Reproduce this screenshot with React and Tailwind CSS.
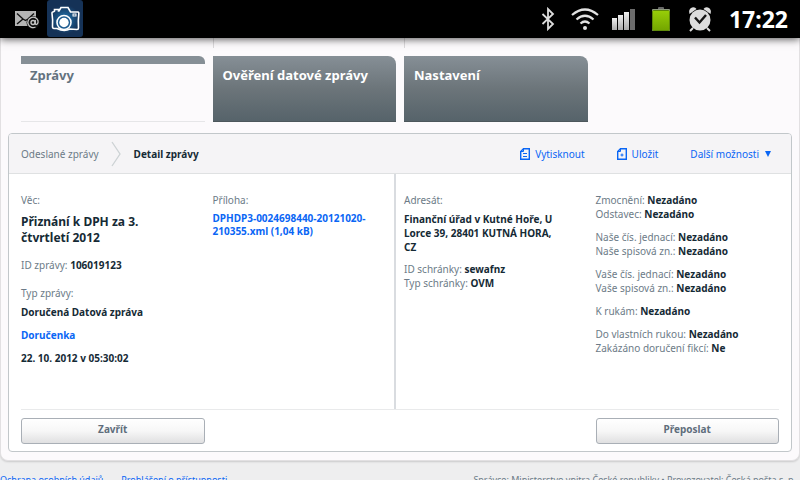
const font = 'font-["Noto_Sans","Open_Sans",sans-serif]';

function StatusBar() {
  return (
    <header className="relative z-10 flex h-[38px] items-center justify-between bg-black pl-[15px] pr-3 text-white shadow-[0_1px_8px_rgba(0,0,0,0.7)]">
      <div className="flex items-center gap-[7px]">
        <svg width="25" height="19" viewBox="0 0 25 19" aria-label="E-mail">
          <rect x="0" y="1" width="21" height="15" fill="#b4b4b4" />
          <path d="M2 3.5 L8 9 L10.500 10.500 L13 9 L19 3.500 M2 14 L8 9" fill="none" stroke="#111" strokeWidth="1.400" />
          <circle cx="18" cy="12.500" r="6.500" fill="#111" />
          <circle cx="18" cy="12.500" r="2" fill="none" stroke="#c4c4c4" strokeWidth="1.400" />
          <path d="M20.300 10 V13.500 Q20.500 15 22 14.200 Q23.500 12.800 23 10.800 A5.200 5.200 0 1 0 20.500 17" fill="none" stroke="#c4c4c4" strokeWidth="1.300" />
        </svg>
        <svg width="36" height="38" viewBox="0 0 36 38" aria-label="Fotoaparát">
          <defs>
            <radialGradient id="cam"><stop offset="0" stopColor="#2278b4" /><stop offset="1" stopColor="#153257" /></radialGradient>
          </defs>
          <rect x="0" y="0" width="36" height="37" rx="3" fill="#153257" />
          <rect x="3" y="5" width="30" height="29" fill="url(#cam)" />
          <path d="M7.500 11 V9.500 H11.500 V11 H12 L14 7.500 H21 L23.500 12 H31 Q32 12 31.800 14 Q31 20 31.500 28 Q31.500 29.500 30 29.500 L23 29 Q17 32 10 28.500 H7 Q5.500 28.500 5.500 26.500 Q6 20 5 13.500 Q4.800 12 6.500 11.800 Z" fill="none" stroke="#fff" strokeWidth="1.600" />
          <rect x="26" y="14" width="3" height="2" fill="none" stroke="#fff" />
          <circle cx="17" cy="22.500" r="7" fill="#1e5c90" stroke="#fff" strokeWidth="1.600" />
          <circle cx="17" cy="22.500" r="4.700" fill="#fff" />
        </svg>
      </div>
      <div className="flex items-center">
        <svg width="14" height="24" viewBox="0 0 14 24" className="mr-4" aria-label="Bluetooth">
          <path d="M1.500 7 L12 17 L7 22 V2 L12 7 L1.500 17" fill="none" stroke="#ddd" strokeWidth="1.800" />
        </svg>
        <svg width="28" height="24" viewBox="0 0 28 24" className="mr-3" aria-label="Wi-Fi">
          <path d="M1 8 Q14 -3 27 8 M5.500 12.500 Q14 5 22.500 12.500 M9.500 16.500 Q14 12.500 18.500 16.500" fill="none" stroke="#e2e2e2" strokeWidth="2.200" />
          <circle cx="14" cy="21" r="2" fill="#e2e2e2" />
        </svg>
        <svg width="24" height="24" viewBox="0 0 24 24" className="mr-4" aria-label="Signál">
          <defs><linearGradient id="sig" x2="0" y2="1"><stop stopColor="#eee" /><stop offset="1" stopColor="#aaa" /></linearGradient></defs>
          <rect x="1" y="11" width="5" height="12" fill="url(#sig)" />
          <rect x="7" y="8" width="5" height="15" fill="url(#sig)" />
          <rect x="13" y="5" width="5" height="18" fill="url(#sig)" />
          <rect x="19" y="2" width="5" height="21" fill="#6b6b6b" />
        </svg>
        <svg width="20" height="26" viewBox="0 0 20 26" className="mr-4" aria-label="Baterie">
          <defs><linearGradient id="bat" x2="0" y2="1"><stop stopColor="#98cf08" /><stop offset="1" stopColor="#73a500" /></linearGradient></defs>
          <rect x="7" y="1" width="6" height="3" rx="1" fill="#666" />
          <rect x="1" y="3" width="18" height="22" rx="1" fill="#8f9a80" />
          <rect x="1.500" y="4.500" width="17" height="20" rx="1" fill="url(#bat)" stroke="#5f8a08" strokeWidth="1" />
        </svg>
        <svg width="26" height="26" viewBox="0 0 26 26" className="mr-4" aria-label="Budík">
          <path d="M6 22 L3 25 M20 22 L23 25" stroke="#ddd" strokeWidth="2" />
          <path d="M2.500 8 Q1 3 5 1.500 Q8 0.500 9.500 3 Z M23.500 8 Q25 3 21 1.500 Q18 0.500 16.500 3 Z" fill="#ddd" />
          <circle cx="13" cy="14" r="10.500" fill="#ddd" />
          <path d="M8 11.500 L12.500 16.500 L19 9" fill="none" stroke="#151515" strokeWidth="2.400" />
        </svg>
        <time className="text-[23px] font-bold leading-8">17:22</time>
      </div>
    </header>
  );
}

function Tabs() {
  const dark =
    "h-[66px] w-full rounded-tr-lg bg-linear-to-b from-[#868f96] via-[#6c757a] to-[#56636a] px-[10px] pt-[9px] text-left text-[13px] leading-5 font-bold text-white border-b border-[#4d575c] flex items-start";
  return (
    <nav className="grid grid-cols-4 gap-2 px-[13px]">
      <button className="flex h-[66px] w-full items-start overflow-hidden rounded-tr-md border-b border-[#e6e6e8] text-left">
        <span className="w-full border-t-8 border-[#868f96] px-[9px] pt-px text-[13px] leading-5 font-bold text-[#63727f]">Zprávy</span>
      </button>
      <button className={dark}>Ověření datové zprávy</button>
      <button className={dark}>Nastavení</button>
    </nav>
  );
}

function DocIcon({ children }) {
  return (
    <svg width="10" height="12" viewBox="0 0 10 12" fill="none" stroke="#0a66f5" aria-hidden="true">
      <path d="M3.500 0.700 H9.300 V11.300 H0.700 V3.500 Z" strokeWidth="1.400" />
      <path d="M3.500 1 V3.500 H1" />
      {children}
    </svg>
  );
}

function Field({ label, value }) {
  return (
    <div>
      {label} <b className="text-[#152a35]">{value}</b>
    </div>
  );
}

const groups = [
  [["Zmocnění:", "Nezadáno"], ["Odstavec:", "Nezadáno"]],
  [["Naše čís. jednací:", "Nezadáno"], ["Naše spisová zn.:", "Nezadáno"]],
  [["Vaše čís. jednací:", "Nezadáno"], ["Vaše spisová zn.:", "Nezadáno"]],
  [["K rukám:", "Nezadáno"]],
  [["Do vlastních rukou:", "Nezadáno"], ["Zakázáno doručení fikcí:", "Ne"]],
];

function Toolbar() {
  return (
    <div className="flex h-10 items-center justify-between border-b border-[#dfe1e2] bg-[#f5f4f6] pl-3 pr-5 pt-px">
      <div className="flex items-center">
        <a href="#odeslane" className="text-[#6c7b87]">Odeslané zprávy</a>
        <svg width="10" height="26" viewBox="0 0 10 26" className="ml-3 mr-[13px]" fill="none" aria-hidden="true">
          <path d="M1 1 L9 13 L1 25" stroke="#ccd2d4" strokeWidth="1.300" />
        </svg>
        <h1 className="font-bold text-[#152a35]">Detail zprávy</h1>
      </div>
      <div className="flex items-center gap-8 text-[#0a66f5]">
        <button className="flex items-center gap-[5px]">
          <DocIcon><path d="M3 5.500 H7 M3 8.500 H7" /></DocIcon>
          Vytisknout
        </button>
        <button className="flex items-center gap-[5px]">
          <DocIcon><path d="M5 5.500 V8.500 M3.500 7 H6.500" /></DocIcon>
          Uložit
        </button>
        <button className="flex items-center gap-[6px]">
          Další možnosti
          <svg width="6" height="6" viewBox="0 0 6 6" fill="#0a66f5" aria-hidden="true"><path d="M0 0 H6 L3 6 Z" /></svg>
        </button>
      </div>
    </div>
  );
}

export default function App() {
  const action =
    "h-[26px] rounded-[3px] border border-[#a9afb6] bg-linear-to-b from-white via-[#f7f7f7] to-[#e0e0e1] pb-1 text-[10px] font-bold text-[#5f6e7c]";
  return (
    <div className={`${font} h-screen overflow-hidden bg-[#eeeeef] text-[10px] leading-[14px] text-[#6c7b87]`}>
      <StatusBar />
      <main className="rounded-b-lg border border-t-0 border-[#e2e0e2] bg-[#fcfafc] px-[7px] pb-2 shadow-[0_1px_2px_rgba(0,0,0,0.15)]">
        <div className="mb-2 grid h-[10px] grid-cols-4 gap-2 px-[13px]" aria-hidden="true">
          <span />
          <span className="border-l border-[#dcdadc]" />
          <span className="border-l border-[#dcdadc]" />
        </div>
        <Tabs />
        <section className="mt-[11px] overflow-hidden rounded-[4px] border border-[#c2c7ca] bg-white">
          <Toolbar />
          <div className="mx-3 border-b border-[#e9eaeb]">
            <div className="grid h-[235px] grid-cols-4 gap-2">
              <div className="pt-[19px]">
                <p>Věc:</p>
                <h2 className="mt-[7px] pr-8 text-[12px] leading-4 font-bold text-[#152a35]">Přiznání k DPH za 3. čtvrtletí 2012</h2>
                <div className="mt-3"><Field label="ID zprávy:" value="106019123" /></div>
                <p className="mt-[14px]">Typ zprávy:</p>
                <p className="mt-[5px] font-bold text-[#152a35]">Doručená Datová zpráva</p>
                <p className="mt-[9px]"><a href="#dorucenka" className="font-bold text-[#0a66f5]">Doručenka</a></p>
                <p className="mt-[9px] font-bold text-[#152a35]">22. 10. 2012 v 05:30:02</p>
              </div>
              <div className="border-r-2 border-[#d9dce0] pt-[19px]">
                <p>Příloha:</p>
                <a href="#priloha" className="mt-[5px] block leading-[13px] font-bold text-[#0a66f5]">DPHDP3-0024698440-20121020-210355.xml (1,04 kB)</a>
              </div>
              <div className="pt-[19px]">
                <p>Adresát:</p>
                <p className="mt-[5px] pr-6 font-bold text-[#152a35]">Finanční úřad v Kutné Hoře, U Lorce 39, 28401 KUTNÁ HORA, CZ</p>
                <div className="mt-2">
                  <Field label="ID schránky:" value="sewafnz" />
                  <Field label="Typ schránky:" value="OVM" />
                </div>
              </div>
              <div className="flex flex-col gap-[9px] pt-[19px]">
                {groups.map((g, i) => (
                  <div key={i}>{g.map(([l, v]) => <Field key={l} label={l} value={v} />)}</div>
                ))}
              </div>
            </div>
          </div>
          <div className="grid grid-cols-4 gap-2 px-3 pt-2 pb-[7px]">
            <button className={action}>Zavřít</button>
            <button className={`${action} col-start-4`}>Přeposlat</button>
          </div>
        </section>
      </main>
      <footer className="flex justify-between pt-3 pr-1 text-[9px]">
        <div className="flex gap-[18px] text-[#0a66f5]">
          <a href="#ochrana">Ochrana osobních údajů</a>
          <a href="#pristupnost">Prohlášení o přístupnosti</a>
        </div>
        <p>Správce: Ministerstvo vnitra České republiky • Provozovatel: Česká pošta s. p.</p>
      </footer>
    </div>
  );
}
